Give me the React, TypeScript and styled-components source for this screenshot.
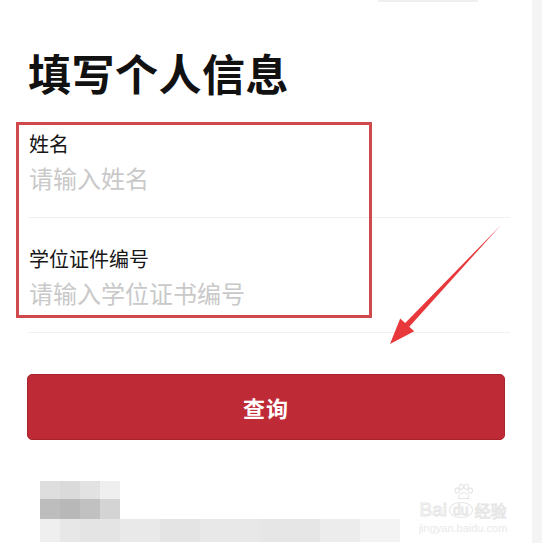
import React from "react"
import styled, { createGlobalStyle } from "styled-components"

const GlobalStyle = createGlobalStyle`
    html, body {
        margin: 0;
        padding: 0;
        background: #ffffff;
    }
    body {
        font-family: "Noto Sans CJK SC", "Noto Sans", sans-serif;
    }
`

const Page = styled.div`
    position: relative;
    width: 542px;
    height: 543px;
    overflow: hidden;
    display: grid;
    grid-template-columns: 532px 10px;
    background: #ffffff;
`

const SideStrip = styled.div`
    background: #f4f4f4;
`

const Content = styled.div`
    padding: 0 22px 0 28px;
`

const TopEdge = styled.div`
    width: 100px;
    height: 2px;
    margin-left: 350px;
    background: #efefef;
`

const Title = styled.h1`
    margin: 45px 0 0 0;
    font-size: 43px;
    line-height: 50px;
    font-weight: 700;
    color: #111111;
    letter-spacing: 0.5px;
`

const FieldList = styled.div`
    margin-top: 33px;
    display: flex;
    flex-direction: column;
`

const Field = styled.div<{ $first?: boolean }>`
    padding: ${(p) => (p.$first ? "0" : "27px")} 0 22px 1px;
    border-bottom: 1px solid #f0f0f0;
`

const Label = styled.div`
    font-size: 20px;
    line-height: 28px;
    color: #161616;
`

const Placeholder = styled.div`
    margin-top: 3px;
    font-size: 24px;
    line-height: 34px;
    color: #c9c9c9;
`

const SubmitButton = styled.button`
    display: block;
    width: 478px;
    height: 66px;
    margin: 41px 0 0 -1px;
    border: 1px solid #a9232f;
    border-radius: 5px;
    background: #bf2a37;
    color: #ffffff;
    font-family: "Noto Sans CJK SC", sans-serif;
    font-size: 22px;
    font-weight: 700;
    letter-spacing: 1px;
`

const Blur = styled.div`
    margin: 41px 0 0 12px;
    display: flex;
    flex-direction: column;
`

const PixelRow = styled.div`
    display: flex;
`

const Pixel = styled.div<{ $w: number; $h: number; $c: string }>`
    width: ${(p) => p.$w}px;
    height: ${(p) => p.$h}px;
    background: ${(p) => p.$c};
`

const Annotation = styled.div`
    position: absolute;
    left: 16px;
    top: 122px;
    width: 350px;
    height: 190px;
    border: 3px solid #d04a4c;
`

const ArrowSvg = styled.svg`
    position: absolute;
    left: 0;
    top: 0;
    pointer-events: none;
`

const Watermark = styled.div`
    position: absolute;
    left: 412px;
    top: 482px;
    width: 102px;
    display: flex;
    flex-direction: column;
    align-items: center;
    font-family: "Liberation Sans", "Noto Sans CJK SC", sans-serif;
    color: transparent;
`

const MarkLine = styled.div`
    display: flex;
    align-items: center;
    gap: 2px;
    margin-top: -2px;
    font-size: 19px;
    line-height: 20px;
    -webkit-text-stroke: 1px #e6e6e6;
`

const MarkDu = styled.span`
    padding: 0 3px;
    font-size: 14px;
    line-height: 14px;
    border: 1.5px solid #e6e6e6;
    border-radius: 50%;
`

const MarkCn = styled.span`
    font-size: 16px;
    font-family: "Noto Sans CJK SC", sans-serif;
`

const MarkUrl = styled.div`
    margin-top: 2px;
    font-size: 11px;
    line-height: 12px;
    color: #e9e9e9;
`

const blurRows = [
    { h: 18, cells: [["#dedede", 20], ["#dadada", 20], ["#e2e2e2", 20], ["#efefef", 20]] },
    { h: 20, cells: [["#bdbdbd", 20], ["#b8b8b8", 20], ["#c1c1c1", 20], ["#d4d4d4", 20]] },
    {
        h: 23,
        cells: [
            ["#efefef", 20],
            ["#e7e7e7", 20],
            ["#e4e4e4", 40],
            ["#e9e9e9", 40],
            ["#e4e4e4", 40],
            ["#e8e8e8", 60],
            ["#e6e6e6", 60],
            ["#ececec", 40],
            ["#f3f3f3", 40],
        ],
    },
] as { h: number; cells: [string, number][] }[]

const Paw = () => (
    <svg width="22" height="20" viewBox="0 0 30 22" fill="none" stroke="#e4e4e4" strokeWidth="1.4">
        <ellipse cx="7" cy="9" rx="3" ry="3.5" />
        <ellipse cx="12.5" cy="4" rx="3" ry="3.5" />
        <ellipse cx="19.5" cy="4" rx="3" ry="3.5" />
        <ellipse cx="25" cy="9" rx="3" ry="3.5" />
        <path d="M9 20 C 9 14, 13 12, 16 12 C 19 12, 23 14, 23 20 Z" />
    </svg>
)

export default function App() {
    return (
        <>
            <GlobalStyle />
            <Page>
                <Content>
                    <TopEdge />
                    <Title>填写个人信息</Title>

                    <FieldList>
                        <Field $first>
                            <Label>姓名</Label>
                            <Placeholder>请输入姓名</Placeholder>
                        </Field>
                        <Field>
                            <Label>学位证件编号</Label>
                            <Placeholder>请输入学位证书编号</Placeholder>
                        </Field>
                    </FieldList>

                    <SubmitButton type="button">查询</SubmitButton>

                    <Blur>
                        {blurRows.map((row, i) => (
                            <PixelRow key={i}>
                                {row.cells.map(([c, w], j) => (
                                    <Pixel key={j} $w={w} $h={row.h} $c={c} />
                                ))}
                            </PixelRow>
                        ))}
                    </Blur>
                </Content>
                <SideStrip />

                <Annotation />

                <ArrowSvg width="542" height="543" viewBox="0 0 542 543">
                    <polygon
                        points="501,225 409.3,326.8 414.2,331.3 390,344 400.2,318.4 405.2,323.1"
                        fill="#e8383b"
                    />
                </ArrowSvg>

                <Watermark>
                    <Paw />
                    <MarkLine>
                        Bai
                        <MarkDu>du</MarkDu>
                        <MarkCn>经验</MarkCn>
                    </MarkLine>
                    <MarkUrl>jingyan.baidu.com</MarkUrl>
                </Watermark>
            </Page>
        </>
    )
}
